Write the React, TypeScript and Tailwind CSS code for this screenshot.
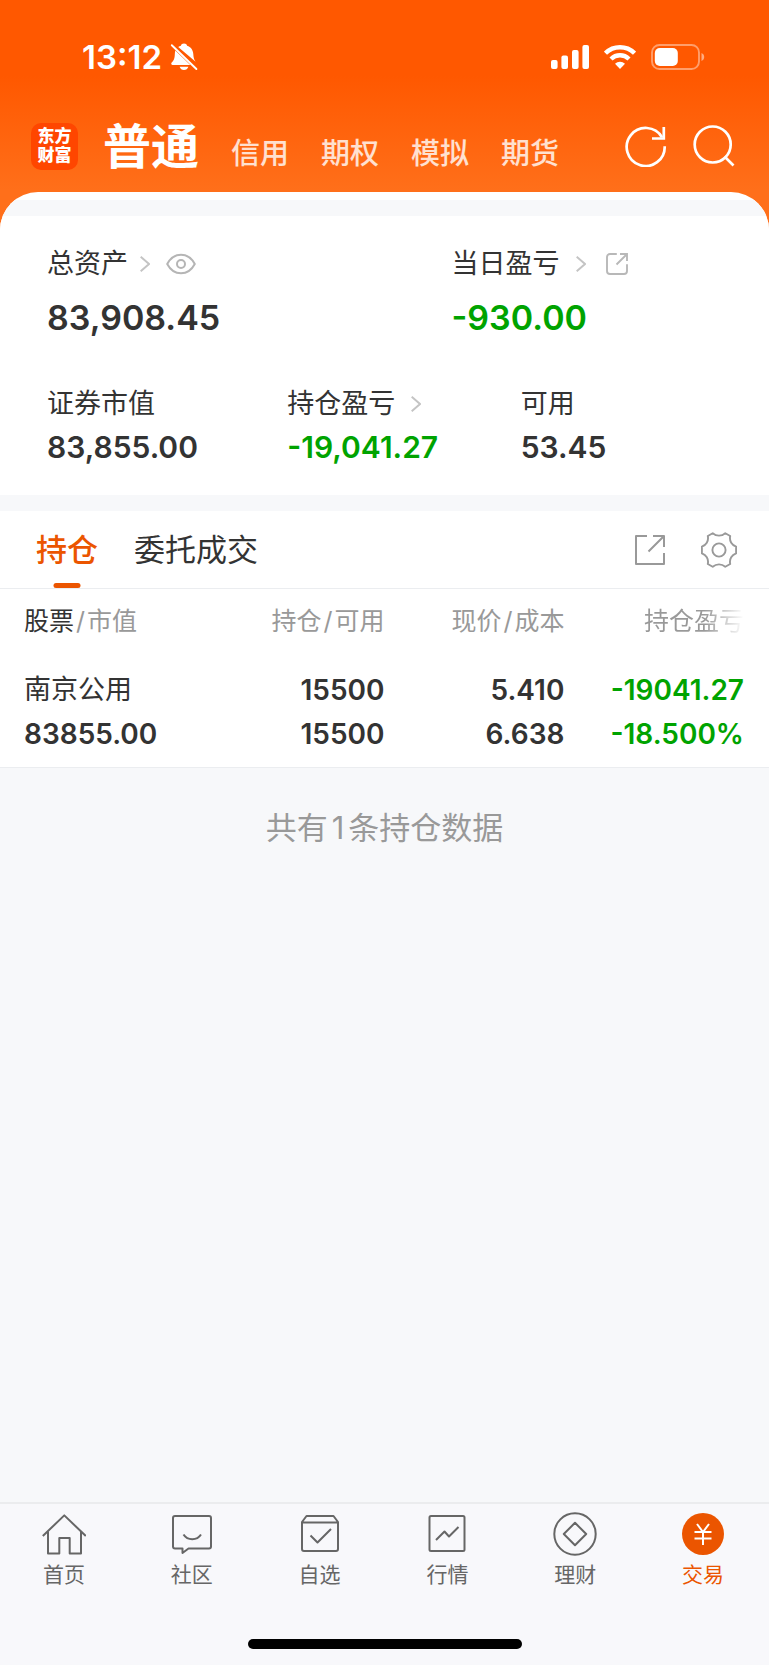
import type { ReactNode } from 'react';

function BellOff() {
  return (
    <svg width="28" height="28" viewBox="0 0 28 28" fill="#fff" aria-hidden="true">
      <path d="M14 .5c1.6 0 2.8.9 3.1 2.2 3.8 1 5.9 4.300 6.200 8.300.3 4.200.8 6 2.900 8.200L8.200 3.900c.8-.6 1.700-1 2.700-1.200C11.200 1.400 12.400.5 14 .5Z" />
      <path d="M5.300 7.500 20.300 22H2.600C1.300 22 .8 20.700 1.700 19.600c2.400-2.700 2.900-4.200 3.100-8.100.1-1.500.1-2.800.5-4Z" />
      <path d="M9.600 23.700h8.800c-.6 2-2.300 3.300-4.400 3.300s-3.800-1.300-4.400-3.300Z" />
      <path d="M1.800 2.200 26.400 26" stroke="#fff" strokeWidth="1.900" strokeLinecap="round" />
    </svg>
  );
}

function Signal() {
  return (
    <svg width="38" height="24" viewBox="0 0 38 24" fill="#fff" aria-hidden="true">
      <rect x="0" y="15" width="6.600" height="9" rx="2" />
      <rect x="10.400" y="10.500" width="6.600" height="13.500" rx="2" />
      <rect x="21" y="5" width="6.600" height="19" rx="2" />
      <rect x="31.400" y="0" width="6.600" height="24" rx="2" />
    </svg>
  );
}

function Wifi() {
  return (
    <svg width="32" height="24" viewBox="0 0 32 24" aria-hidden="true">
      <g fill="none" stroke="#fff" strokeWidth="4.400">
        <path d="M1.500 8.200a20.800 20.800 0 0 1 29 0" />
        <path d="M7 14a12.800 12.800 0 0 1 18 0" />
      </g>
      <path d="M11 18.800a7.300 7.300 0 0 1 10 0l-5 5.200Z" fill="#fff" />
    </svg>
  );
}

function Battery() {
  return (
    <svg width="54" height="26" viewBox="0 0 54 26" aria-hidden="true">
      <rect x="1" y="1" width="47" height="24" rx="7.500" fill="none" stroke="#fff" strokeOpacity=".42" strokeWidth="1.900" />
      <path d="M50.500 9v8c1.700-.7 2.700-2.200 2.700-4s-1-3.300-2.700-4Z" fill="#fff" fillOpacity=".5" />
      <rect x="3.800" y="4" width="23" height="18" rx="5" fill="#fff" />
    </svg>
  );
}

function RefreshIcon() {
  return (
    <svg width="42" height="42" viewBox="0 0 42 42" fill="none" stroke="#fff" strokeWidth="2.700" aria-hidden="true">
      <path d="M39.700 21.300A19 19 0 1 1 37 12.200" />
      <path d="M38.800 2v11.500H27" />
    </svg>
  );
}

function SearchIcon() {
  return (
    <svg width="42" height="42" viewBox="0 0 42 42" fill="none" stroke="#fff" strokeWidth="2.700" aria-hidden="true">
      <circle cx="19.700" cy="19.500" r="18" />
      <path d="m31.500 31.500 9 9" />
    </svg>
  );
}

function Chevron() {
  return (
    <svg width="10" height="16" viewBox="0 0 10 16" fill="none" stroke="#c4c4c4" strokeWidth="1.900" aria-hidden="true">
      <path d="m.7.7 8.300 7.300-8.300 7.300" />
    </svg>
  );
}

function Eye() {
  return (
    <svg width="30" height="22" viewBox="0 0 30 22" fill="none" stroke="#b5b5b5" strokeWidth="2" strokeLinejoin="round" aria-hidden="true">
      <path d="M1.200 11C4.500 4.800 9.200 1.700 15 1.700S25.500 4.800 28.800 11C25.500 17.200 20.800 20.300 15 20.300S4.500 17.200 1.200 11Z" />
      <circle cx="15" cy="11" r="4" />
    </svg>
  );
}

function ShareSmall() {
  return (
    <svg width="22" height="22" viewBox="0 0 22 22" fill="none" stroke="#b8b8b8" strokeWidth="1.900" aria-hidden="true">
      <path d="M10.800 1H4a3 3 0 0 0-3 3v14a3 3 0 0 0 3 3h14a3 3 0 0 0 3-3v-6.800" />
      <path d="M14 1h7v7M21 1 10.500 11.500" />
    </svg>
  );
}

function ShareLarge() {
  return (
    <svg width="30" height="30" viewBox="0 0 30 30" fill="none" stroke="#999" strokeWidth="2" strokeLinejoin="round" aria-hidden="true">
      <path d="M12 1H1v28h28V18" />
      <path d="M18 1h11v11M29 1 13.500 16.500" />
    </svg>
  );
}

function Gear() {
  return (
    <svg width="36" height="36" viewBox="0 0 36 36" fill="none" stroke="#999" strokeWidth="1.900" strokeLinejoin="round" aria-hidden="true">
      <path d="M11.700 1.200C13.800 3 15.600 3.600 18 3.600s4.200-.6 6.300-2.400l4.900 2.800c-.6 2.800-.2 4.700 1 6.700 1.100 1.800 2.300 2.900 4.900 3.900v6.800c-2.600 1-3.800 2.100-4.900 3.900-1.200 2-1.600 3.900-1 6.700l-4.900 2.800c-2.100-1.800-3.900-2.400-6.300-2.400s-4.200.6-6.300 2.400L6.800 32c.6-2.800.2-4.700-1-6.700-1.100-1.800-2.300-2.900-4.900-3.900v-6.800c2.600-1 3.800-2.100 4.900-3.900 1.200-2 1.600-3.900 1-6.700Z" />
      <circle cx="18" cy="18" r="6.600" />
    </svg>
  );
}

function NavSvg({ children }: { children: ReactNode }) {
  return (
    <svg width="44" height="44" viewBox="0 0 44 44" fill="none" stroke="#666" strokeWidth="2" strokeLinejoin="round" aria-hidden="true">
      {children}
    </svg>
  );
}

const navItems: { label: string; active?: boolean; icon: ReactNode }[] = [
  {
    label: '首页',
    icon: (
      <NavSvg>
        <path d="M.8 24 22.300 3.400 43.800 24" />
        <path d="M6 19.500v22h11.300V26h10.400v15.500H39v-22" />
      </NavSvg>
    ),
  },
  {
    label: '社区',
    icon: (
      <NavSvg>
        <path d="M5 4h34a2 2 0 0 1 2 2v28.500a2 2 0 0 1-2 2H18.500L12.500 41v-4.500H5a2 2 0 0 1-2-2V6a2 2 0 0 1 2-2Z" />
        <path d="M13.500 22.500c4 6.300 13.500 6.300 17.500 0" />
      </NavSvg>
    ),
  },
  {
    label: '自选',
    icon: (
      <NavSvg>
        <path d="M4 10 8.500 4h27L40 10v27a2 2 0 0 1-2 2H6a2 2 0 0 1-2-2ZM4 10.500h36" />
        <path d="m12.500 23.500 7 7L33 17" />
      </NavSvg>
    ),
  },
  {
    label: '行情',
    icon: (
      <NavSvg>
        <rect x="4.500" y="4" width="35" height="35" rx="1.500" />
        <path d="m11 28 8.500-8.500 4.500 5L33.500 15" />
      </NavSvg>
    ),
  },
  {
    label: '理财',
    icon: (
      <NavSvg>
        <circle cx="22" cy="22" r="20.700" />
        <path d="m22 10.800 11.200 11.200L22 33.200 10.800 22Z" />
      </NavSvg>
    ),
  },
  {
    label: '交易',
    active: true,
    icon: (
      <svg width="44" height="44" viewBox="0 0 44 44" fill="none" aria-hidden="true">
        <circle cx="22" cy="22" r="21" fill="#eb5500" />
        <path d="m16 12 6 8 6-8M22 20v13M13.500 20h17M13.500 26.500h17" stroke="#fff" strokeWidth="2" />
      </svg>
    ),
  },
];

const accounts = ['信用', '期权', '模拟', '期货'];

function Value({ children, large, loss }: { children: ReactNode; large?: boolean; loss?: boolean }) {
  return (
    <div
      className={`font-semibold leading-[44px] ${large ? 'text-[34px]' : 'text-[30px]'} ${loss ? 'text-[#00a300]' : ''}`}
    >
      {children}
    </div>
  );
}

function Summary() {
  return (
    <section className="bg-white pt-8 pb-[26px] pl-[47px] text-[27px]">
      <div className="grid grid-cols-[404fr_317fr]">
        <div>
          <div className="flex h-8 items-center">
            <span>总资产</span>
            <button type="button" aria-label="总资产详情" className="ml-3">
              <Chevron />
            </button>
            <button type="button" aria-label="隐藏金额" className="ml-4">
              <Eye />
            </button>
          </div>
          <div className="mt-4">
            <Value large>83,908.45</Value>
          </div>
        </div>
        <div>
          <div className="flex h-8 items-center">
            <span>当日盈亏</span>
            <button type="button" aria-label="当日盈亏详情" className="ml-4">
              <Chevron />
            </button>
            <button type="button" aria-label="分享当日盈亏" className="ml-5">
              <ShareSmall />
            </button>
          </div>
          <div className="mt-4">
            <Value large loss>-930.00</Value>
          </div>
        </div>
      </div>
      <div className="mt-12 grid grid-cols-[240fr_233fr_248fr]">
        <div>
          <div className="flex h-8 items-center">证券市值</div>
          <div className="mt-[5px]"><Value>83,855.00</Value></div>
        </div>
        <div>
          <div className="flex h-8 items-center">
            <span>持仓盈亏</span>
            <button type="button" aria-label="持仓盈亏详情" className="ml-4">
              <Chevron />
            </button>
          </div>
          <div className="mt-[5px]"><Value loss>-19,041.27</Value></div>
        </div>
        <div>
          <div className="flex h-8 items-center">可用</div>
          <div className="mt-[5px]"><Value>53.45</Value></div>
        </div>
      </div>
    </section>
  );
}

function Positions() {
  return (
    <section className="bg-white">
      <div className="flex h-[78px] items-stretch justify-between border-b border-[#ebedf0] pr-8 pl-9">
        <div className="flex gap-9 text-[31px]">
          <button type="button" className="relative pt-0.5 font-medium text-[#eb5500]">
            持仓
            <span className="absolute bottom-0 left-1/2 h-[5px] w-[27px] -translate-x-1/2 rounded-sm bg-[#eb5500]" />
          </button>
          <button type="button" className="pt-0.5">委托成交</button>
        </div>
        <div className="flex items-center gap-9">
          <button type="button" aria-label="分享持仓"><ShareLarge /></button>
          <button type="button" aria-label="设置"><Gear /></button>
        </div>
      </div>
      <table className="w-full table-fixed border-b border-[#ebedf0]">
        <colgroup>
          <col className="w-[27%]" />
          <col className="w-[23%]" />
          <col className="w-[23.4%]" />
          <col className="w-[26.6%]" />
        </colgroup>
        <thead>
          <tr className="h-16 text-right text-[25px] text-[#999] [&>th]:pt-0.5 [&>th]:font-normal [&>th]:whitespace-nowrap">
            <th className="pl-6 text-left">
              <span className="text-[#333]">股票</span><span className="mx-0.5">/</span>市值
            </th>
            <th>持仓<span className="mx-0.5">/</span>可用</th>
            <th>现价<span className="mx-0.5">/</span>成本</th>
            <th className="pr-[25px]">
              <span className="bg-linear-to-r from-[#999] from-60% to-white bg-clip-text text-transparent">持仓盈亏</span>
            </th>
          </tr>
        </thead>
        <tbody>
          <tr className="text-right text-[28px] leading-[44px] font-semibold [&>td]:pt-[15px] [&>td]:pb-[11px]">
            <td className="pl-6 text-left">
              <div className="text-[27px] font-normal">南京公用</div>
              <div>83855.00</div>
            </td>
            <td>
              <div>15500</div>
              <div>15500</div>
            </td>
            <td>
              <div>5.410</div>
              <div>6.638</div>
            </td>
            <td className="pr-[25px] text-[#00a300]">
              <div>-19041.27</div>
              <div>-18.500%</div>
            </td>
          </tr>
        </tbody>
      </table>
    </section>
  );
}

export default function App() {
  return (
    <div className="flex min-h-screen flex-col bg-[#f7f8fa] font-['Inter','Noto_Sans_CJK_SC',sans-serif] text-[#333]">
      <div className="bg-[linear-gradient(to_bottom,#ff5800_76px,#ff6f1a_190px)]">
        <div className="flex h-[92px] items-center justify-between pt-[22px] pr-16 pl-[82px] text-white">
          <div className="flex items-center gap-2">
            <span className="text-[33px] leading-none font-semibold">13:12</span>
            <BellOff />
          </div>
          <div className="flex items-center gap-[15px]">
            <Signal />
            <Wifi />
            <Battery />
          </div>
        </div>
        <header className="flex h-[100px] items-center pt-2 pr-[34px] pl-[31px] text-white">
          <div className="flex size-[47px] flex-col items-center justify-center rounded-[10px] bg-[#ff4600] text-[17px] leading-[19px] font-black">
            <span>东方</span>
            <span>财富</span>
          </div>
          <nav className="ml-[25px] flex items-baseline gap-8 pt-2 leading-[56px] whitespace-nowrap">
            <a href="#normal" className="text-[48px] font-bold">普通</a>
            {accounts.map((name) => (
              <a key={name} href={`#${name}`} className="text-[29px] font-medium text-white/80">{name}</a>
            ))}
          </nav>
          <div className="ml-auto flex items-center gap-[26px]">
            <button type="button" aria-label="刷新"><RefreshIcon /></button>
            <button type="button" aria-label="搜索"><SearchIcon /></button>
          </div>
        </header>
        <div className="overflow-hidden rounded-t-[38px] bg-white pt-2">
          <div className="h-4 bg-[#f7f8fa]" />
          <Summary />
        </div>
      </div>
      <main className="mt-4 flex-1">
        <Positions />
        <p className="mt-[38px] text-center text-[31px] leading-[44px] text-[#999]">
          共有<span className="mx-1">1</span>条持仓数据
        </p>
      </main>
      <footer className="border-t-2 border-[#ebecee] bg-[#f8f8fb] pb-4">
        <nav className="grid grid-cols-6 pt-2 pr-0.5">
          {navItems.map((item) => (
            <a
              key={item.label}
              href={`#${item.label}`}
              className={`flex flex-col items-center text-[21px] leading-8 ${item.active ? 'text-[#eb5500]' : 'text-[#666]'}`}
            >
              {item.icon}
              <span className="mt-[3px]">{item.label}</span>
            </a>
          ))}
        </nav>
        <div className="mx-auto mt-12 h-[10px] w-[274px] rounded-full bg-black" />
      </footer>
    </div>
  );
}
